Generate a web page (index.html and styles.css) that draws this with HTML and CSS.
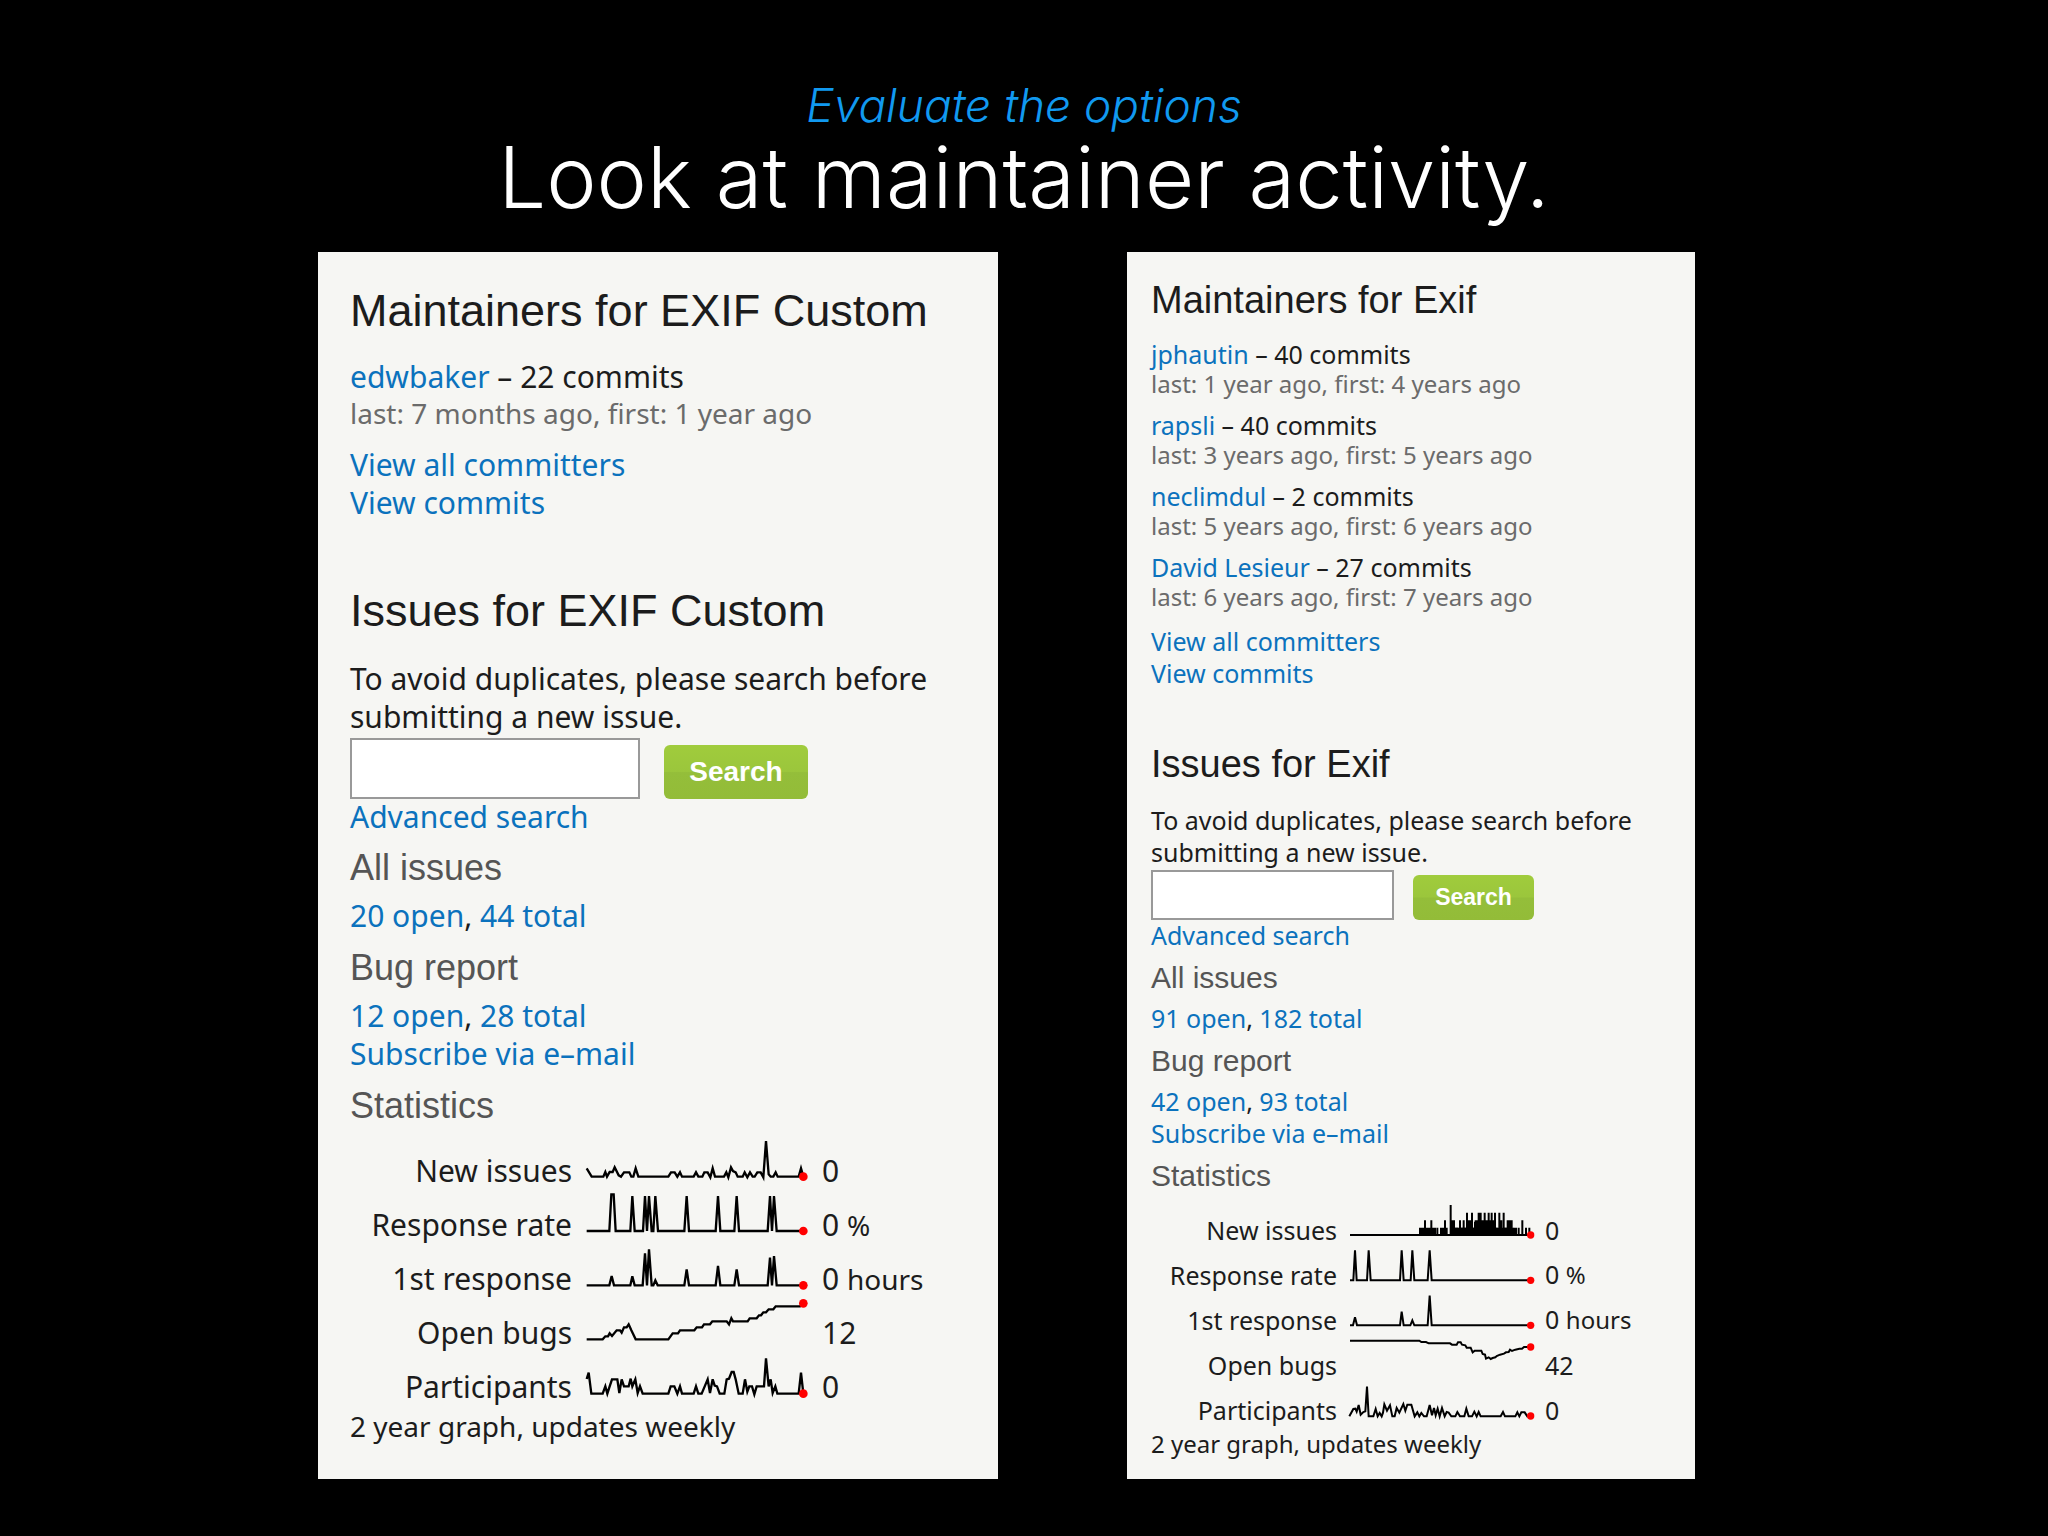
FILE: index.html
```html
<!DOCTYPE html>
<html lang="en">
<head>
<meta charset="utf-8">
<title>Look at maintainer activity</title>
<link rel="stylesheet" href="styles.css">
</head>
<body>
<main class="slide">
  <header class="slide-header">
    <p class="kicker">Evaluate the options</p>
    <h1 class="title">Look at maintainer activity.</h1>
  </header>
  <div class="panels">
    <article class="panel panel-large">
      <section class="maintainers">
        <h2>Maintainers for EXIF Custom</h2>
        <ul class="committers">
          <li><div><a href="#">edwbaker</a> – 22 commits</div><div class="dates">last: 7 months ago, first: 1 year ago</div></li>
        </ul>
        <div class="links"><a href="#">View all committers</a><a href="#">View commits</a></div>
      </section>
      <section>
        <h2>Issues for EXIF Custom</h2>
        <form class="search">
          <label class="intro" for="q1">To avoid duplicates, please search before submitting a new issue.</label>
          <div class="search-row"><input id="q1" type="text"><button type="button">Search</button></div>
          <a class="advanced" href="#">Advanced search</a>
        </form>
        <h3>All issues</h3>
        <p><a href="#">20 open</a>, <a href="#">44 total</a></p>
        <h3>Bug report</h3>
        <p><a href="#">12 open</a>, <a href="#">28 total</a></p>
        <p><a href="#">Subscribe via e–mail</a></p>
        <h3>Statistics</h3>
        <table class="stats">
          <tr><th scope="row">New issues</th><td><svg class="spark" viewBox="39 33 684 162"><polyline points="50,112 65,137 100,137 106,123 111,137 119,123 128,123 134,109 146,133 153,137 162,124 178,124 184,137 190,137 197,112 205,137 295,137 303,124 314,124 322,137 330,124 336,137 371,137 378,124 385,137 397,137 403,124 413,124 421,139 428,112 435,137 462,137 469,124 475,139 483,109 489,120 497,124 503,137 518,137 524,124 532,139 540,124 548,137 554,137 562,124 572,124 580,139 588,30 596,130 602,137 610,137 617,124 623,137 686,137 693,112 700,137"/><circle cx="700" cy="137" r="13"/></svg></td><td>0</td></tr>
          <tr><th scope="row">Response rate</th><td><svg class="spark" viewBox="39 195 684 162"><polyline points="50,300 118,300 124,190 131,190 137,300 181,300 187,195 194,300 219,300 225,195 231,300 237,195 245,300 250,300 256,195 264,300 343,300 350,195 357,300 437,300 444,195 451,300 493,300 500,195 507,300 593,300 600,195 606,300 612,195 620,300 700,300"/><circle cx="700" cy="300" r="13"/></svg></td><td>0 <small>%</small></td></tr>
          <tr><th scope="row">1st response</th><td><svg class="spark" viewBox="39 -33 684 162"><polyline points="50,73 118,73 125,45 132,73 181,73 187,46 194,73 218,73 225,-23 231,73 237,-35 245,73 250,73 256,58 263,73 343,73 350,25 357,73 437,73 444,15 451,73 493,73 500,25 507,73 593,73 600,-10 606,73 612,-15 620,73 700,73"/><circle cx="700" cy="73" r="13"/></svg></td><td>0 <small>hours</small></td></tr>
          <tr><th scope="row">Open bugs</th><td><svg class="spark" viewBox="39 129 684 162"><polyline points="50,235 98,235 106,226 114,226 119,217 126,225 140,208 150,208 155,215 162,199 170,199 176,190 184,208 197,235 295,235 308,217 324,217 330,208 373,208 380,199 396,199 402,190 420,190 427,181 470,181 477,190 484,172 489,181 533,181 539,172 560,172 567,163 573,163 580,154 588,154 596,145 610,145 617,136 690,136 700,127"/><circle cx="700" cy="127" r="13"/></svg></td><td>12</td></tr>
          <tr><th scope="row">Participants</th><td><svg class="spark" viewBox="39 291 684 162"><polyline points="50,354 56,335 64,398 98,398 106,376 112,398 119,376 126,355 142,355 148,396 155,355 162,376 176,376 182,353 187,376 196,355 203,396 210,376 218,398 295,398 302,376 313,376 322,398 330,376 336,398 371,398 378,376 385,398 395,398 413,355 420,396 428,355 434,374 441,376 449,398 463,398 470,355 477,353 485,333 491,333 497,355 506,398 518,398 525,355 532,392 538,376 546,376 553,400 560,376 582,376 588,292 596,376 602,355 608,396 616,376 622,398 686,398 693,335 700,398"/><circle cx="700" cy="398" r="13"/></svg></td><td>0</td></tr>
        </table>
        <p class="note">2 year graph, updates weekly</p>
      </section>
    </article>

    <article class="panel panel-small">
      <section class="maintainers">
        <h2>Maintainers for Exif</h2>
        <ul class="committers">
          <li><div><a href="#">jphautin</a> – 40 commits</div><div class="dates">last: 1 year ago, first: 4 years ago</div></li>
          <li><div><a href="#">rapsli</a> – 40 commits</div><div class="dates">last: 3 years ago, first: 5 years ago</div></li>
          <li><div><a href="#">neclimdul</a> – 2 commits</div><div class="dates">last: 5 years ago, first: 6 years ago</div></li>
          <li><div><a href="#">David Lesieur</a> – 27 commits</div><div class="dates">last: 6 years ago, first: 7 years ago</div></li>
        </ul>
        <div class="links"><a href="#">View all committers</a><a href="#">View commits</a></div>
      </section>
      <section>
        <h2>Issues for Exif</h2>
        <form class="search">
          <label class="intro" for="q2">To avoid duplicates, please search before submitting a new issue.</label>
          <div class="search-row"><input id="q2" type="text"><button type="button">Search</button></div>
          <a class="advanced" href="#">Advanced search</a>
        </form>
        <h3>All issues</h3>
        <p><a href="#">91 open</a>, <a href="#">182 total</a></p>
        <h3>Bug report</h3>
        <p><a href="#">42 open</a>, <a href="#">93 total</a></p>
        <p><a href="#">Subscribe via e–mail</a></p>
        <h3>Statistics</h3>
        <table class="stats">
          <tr><th scope="row">New issues</th><td><svg class="spark" viewBox="18 36 570 135"><path d="M30 120H572M240 120V98M246 120V98M250 120V98M255 120V76M260 120V98M265 120V98M270 120V98M274 120V76M279 120V98M285 120V98M292 120V98M303 120V98M309 120V98M315 120V76M320 120V98M332 120V30M337 120V76M342 120V76M347 120V98M352 120V98M360 120V76M366 120V98M371 120V76M375 120V98M381 120V53M387 120V76M391 120V76M396 120V53M402 120V98M407 120V76M411 120V76M416 120V53M422 120V53M428 120V76M434 120V53M440 120V76M446 120V53M450 120V76M455 120V53M459 120V76M465 120V53M470 120V98M478 120V53M484 120V76M491 120V53M497 120V98M503 120V76M509 120V76M515 120V76M522 120V98M528 120V98M536 120V98M547 120V76M558 120V98M568 120V98"/><path class="fill" d="M345 120V98H402V80H468V98H520V120Z"/><circle cx="572" cy="120" r="11"/></svg></td><td>0</td></tr>
          <tr><th scope="row">Response rate</th><td><svg class="spark" viewBox="18 171 570 135"><polyline points="30,256 40,256 45,166 50,256 81,256 86,166 92,256 180,256 185,166 191,256 212,256 217,166 223,256 263,256 269,166 275,256 572,256"/><circle cx="572" cy="256" r="11"/></svg></td><td>0 <small>%</small></td></tr>
          <tr><th scope="row">1st response</th><td><svg class="spark" viewBox="18 306 570 135"><polyline points="30,391 39,391 45,367 51,391 180,391 185,350 191,391 211,391 217,376 223,391 263,391 269,302 275,391 572,391"/><circle cx="572" cy="391" r="11"/></svg></td><td>0 <small>hours</small></td></tr>
          <tr><th scope="row">Open bugs</th><td><svg class="spark" viewBox="18 66 570 135"><polyline points="30,62 238,62 244,66 258,66 266,70 330,70 336,74 350,74 354,67 362,67 366,74 376,76 380,83 392,83 398,97 404,92 424,92 428,102 435,104 438,116 446,112 452,117 458,114 466,112 470,108 480,104 492,101 498,97 506,96 510,89 516,93 526,89 538,86 546,86 552,81 572,81"/><circle cx="572" cy="81" r="11"/></svg></td><td>42</td></tr>
          <tr><th scope="row">Participants</th><td><svg class="spark" viewBox="18 201 570 135"><polyline points="28,289 40,267 46,266 50,275 56,255 62,284 70,276 76,274 81,200 86,289 100,289 107,267 113,289 119,279 125,289 129,278 133,253 141,272 150,256 157,289 164,289 170,264 178,278 190,252 196,272 202,254 214,254 224,289 232,277 238,289 244,279 252,289 260,289 269,255 276,286 282,264 287,286 293,266 299,289 306,264 314,289 320,276 326,278 334,289 346,289 352,276 360,289 373,289 379,266 386,289 396,289 403,275 410,289 416,276 422,289 482,289 489,276 495,289 526,289 532,277 538,289 544,277 554,277 562,289 572,288"/><circle cx="572" cy="288" r="11"/></svg></td><td>0</td></tr>
        </table>
        <p class="note">2 year graph, updates weekly</p>
      </section>
    </article>
  </div>
</main>
</body>
</html>
```
FILE: styles.css
```css
* { box-sizing: border-box; }

body {
  margin: 0;
  background: #000;
}

h1, h2, h3, p, ul { margin: 0; padding: 0; font-weight: 400; }
ul { list-style: none; }
a { color: #0b72bd; text-decoration: none; }

.slide { padding-top: 76px; }

.slide-header {
  text-align: center;
  font-family: Inter, "Liberation Sans", sans-serif;
}

.kicker {
  color: #1199f0;
  font-size: 46px;
  line-height: 58px;
  font-style: italic;
  font-weight: 300;
}

.title {
  color: #fff;
  font-size: 85px;
  line-height: 88px;
  font-weight: 300;
}

.panels {
  display: grid;
  grid-template-columns: 680fr 568fr;
  gap: 129px;
  padding: 30px 353px 58px 318px;
}

.panel {
  background: #f6f6f3;
  color: #1c1c1c;
  font-family: "Noto Sans", "Open Sans", sans-serif;
  font-size: var(--text);
  line-height: var(--line);
  padding: var(--pad);
}

.panel-large {
  --text: 30px;
  --line: 38px;
  --small: 28px;
  --small-line: 34px;
  --pad: 31px 32px 37px;
  --h2: 45px;
  --h2-line: 56px;
  --h2-gap: 19px;
  --h3: 36px;
  --h3-line: 44px;
  --h3-top: 11px;
  --h3-gap: 7px;
  --section-gap: 61px;
  --item-gap: 16px;
  --links-gap: 16px;
  --field-w: 290px;
  --field-h: 61px;
  --button-w: 144px;
  --button-h: 54px;
  --button-text: 28px;
  --button-gap: 24px;
  --advanced-line: 36px;
  --label-w: 222px;
  --label-drop: 4px;
  --spark-gap: 11px;
  --spark-w: 228px;
  --spark-stroke: 7;
  --row: 54px;
  --table-gap: 14px;
  --note-line: 28px;
}

.panel-small {
  --text: 25px;
  --line: 32px;
  --small: 24px;
  --small-line: 28px;
  --pad: 25px 24px 23px;
  --h2: 38px;
  --h2-line: 46px;
  --h2-gap: 15px;
  --h3: 30px;
  --h3-line: 36px;
  --h3-top: 9px;
  --h3-gap: 6px;
  --section-gap: 52px;
  --item-gap: 11px;
  --links-gap: 14px;
  --field-w: 243px;
  --field-h: 50px;
  --button-w: 121px;
  --button-h: 45px;
  --button-text: 23px;
  --button-gap: 19px;
  --advanced-line: 31px;
  --label-w: 186px;
  --label-drop: 0;
  --spark-gap: 9px;
  --spark-w: 190px;
  --spark-stroke: 6;
  --row: 45px;
  --table-gap: 13px;
  --note-line: 24px;
}

.panel h2, .panel h3 { font-family: "Liberation Sans", Arial, sans-serif; }
.panel h2 { font-size: var(--h2); line-height: var(--h2-line); margin-bottom: var(--h2-gap); }
.panel h3 { font-size: var(--h3); line-height: var(--h3-line); margin: var(--h3-top) 0 var(--h3-gap); color: #555; }

.maintainers { margin-bottom: var(--section-gap); }
.committers { display: grid; gap: var(--item-gap); }
.dates { color: #6b6b6b; font-size: var(--small); line-height: var(--small-line); }
.links { display: grid; justify-items: start; margin-top: var(--links-gap); }

.search { display: grid; justify-items: start; padding-top: 2px; }
.search-row { display: flex; align-items: flex-end; gap: var(--button-gap); margin-top: 2px; }
.search-row input {
  width: var(--field-w);
  height: var(--field-h);
  border: 2px solid #999;
  background: #fff;
  padding: 0 8px;
  font: inherit;
}
.search-row button {
  width: var(--button-w);
  height: var(--button-h);
  padding: 0;
  border: 0;
  border-radius: 6px;
  background: linear-gradient(#a0cc3c, #9bc63c 49%, #94be3a 51%, #93bc38);
  color: #fff;
  font: 700 var(--button-text) "Liberation Sans", Arial, sans-serif;
}
.advanced { line-height: var(--advanced-line); }

.stats { border-collapse: collapse; table-layout: fixed; width: 100%; margin-top: var(--table-gap); }
.stats tr { height: var(--row); }
.stats th, .stats td { padding: var(--label-drop) 0 0; vertical-align: middle; text-align: left; white-space: nowrap; }
.stats th { width: var(--label-w); font-weight: 400; text-align: right; }
.stats td:nth-child(2) { width: calc(var(--spark-w) + 2 * var(--spark-gap)); padding: 0 var(--spark-gap); }
.stats small { font-size: var(--small); }

.spark { display: block; width: var(--spark-w); height: var(--row); overflow: visible; fill: none; stroke: #000; stroke-width: var(--spark-stroke); }
.spark circle { fill: #f00; stroke: none; }
.spark .fill { fill: #000; stroke: none; }

.note { font-size: var(--small); line-height: var(--note-line); }
```
